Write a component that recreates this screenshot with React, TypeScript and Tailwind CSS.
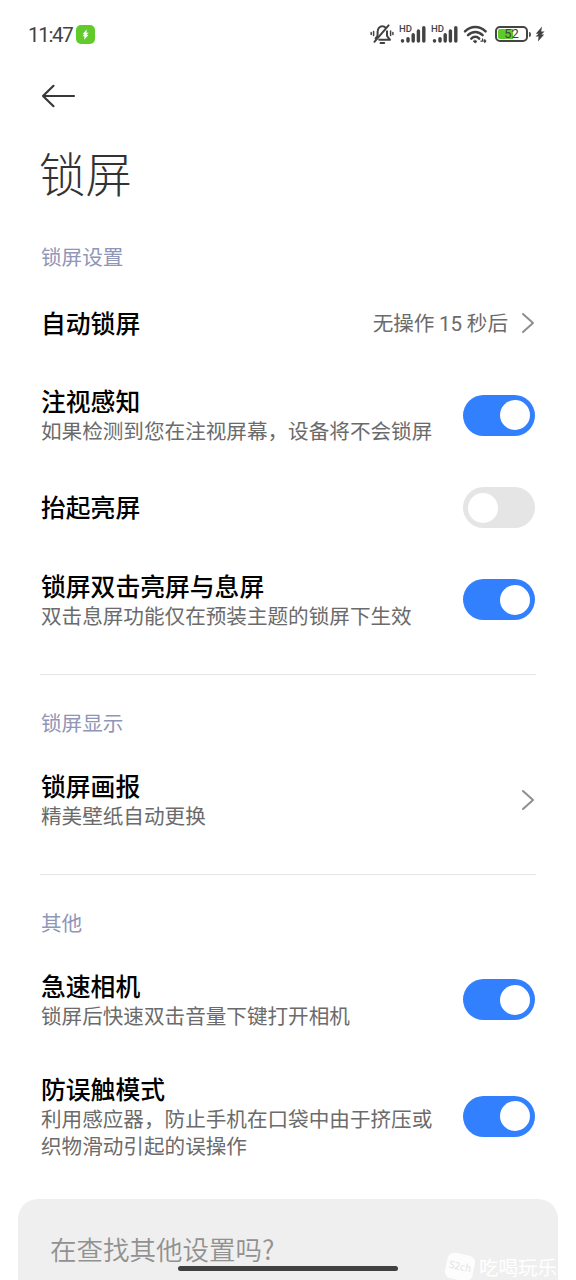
import { ReactNode, useState } from "react";
import clsx from "clsx";

const Bolt = ({ className }: { className?: string }) => (
    <svg viewBox="0 0 10 16" className={className} fill="currentColor">
        <path d="M7 0.5 0.8 7.8H3.6L0.6 10.4H3.6L3 15.5 9.2 8.6H6.4L9.6 5.6H6.2Z" />
    </svg>
);

const BellOff = () => (
    <svg viewBox="0 0 24 22" className="w-6 h-[22px] shrink-0" fill="none" stroke="currentColor" strokeWidth="2" strokeLinecap="round" strokeLinejoin="round">
        <path d="M5.6 15.6 7.6 12.6V8.7C7.6 5.8 9.6 3.2 12.2 3.2C13.6 3.2 14.8 3.7 15.6 4.6" />
        <path d="M17 8.2V12.8L20 16.8H9.2" />
        <path d="M18.6 2.4 4.4 18.8" />
        <path d="M10.5 20H14.2" />
        <path d="M3.6 8.4V12.6M1.2 9.6V11.4M20.6 8V12.6M22.9 9.6V11.4" strokeWidth="1.5" />
    </svg>
);

const Signal = () => (
    <div className="relative w-[27px] h-5 shrink-0">
        <span className="absolute left-0 top-0 text-[9.5px] leading-[9px] font-medium">HD</span>
        <svg viewBox="0 0 27 20" className="w-[27px] h-5" stroke="currentColor" strokeWidth="3.4" strokeLinecap="round">
            <path d="M3.5 17V16.6M9 17V14.6M14.2 17V10.8M19.4 17V7M24.8 17V3.8" />
        </svg>
    </div>
);

const Wifi = () => (
    <svg viewBox="0 0 25 20" className="w-[25px] h-5 shrink-0" fill="none" stroke="currentColor" strokeWidth="2.5" strokeLinecap="round">
        <path d="M2 7.4C7.8 1.4 16.8 1.4 22.6 7.4" />
        <path d="M5 11.2C9.2 6.8 15.4 6.8 19.6 11.2" />
        <path d="M8.3 14.6C10.7 12.2 14 12.2 16.2 14.6" />
        <path d="M12.2 16.2 14 17.5 12.2 19 10.4 17.5Z" fill="currentColor" strokeWidth="0.8" />
        <path d="M18 17.2H19.6V15M21.8 15.6V18.2M21 17 21.8 18.2 22.8 17" strokeWidth="1.3" />
    </svg>
);

const Battery = () => (
    <div className="flex items-center gap-[1px] shrink-0">
        <div className="relative w-[33px] h-4 rounded-[5px] border-2 border-[#444] p-[1px]">
            <div className="w-[15px] h-full rounded-l-[2px] bg-[#5ccb28]" />
            <span className="absolute inset-0 text-center text-[13px] leading-[12px]">52</span>
        </div>
        <div className="w-[2px] h-[5px] rounded-r bg-[#555]" />
    </div>
);

const StatusBar = () => (
    <div className="flex items-center h-[68px] pl-7 pr-[31px] text-[#424242] font-['Roboto',sans-serif]">
        <span className="w-[48px] pt-px text-[20.5px] leading-6 tracking-[-1.3px]">11:47</span>
        <div className="size-[19px] rounded-[5px] bg-[#62cb2c] flex items-center justify-center text-white">
            <Bolt className="w-[7px] h-[11px]" />
        </div>
        <div className="ml-auto flex items-center">
            <BellOff />
            <div className="ml-[5px] flex gap-[5px]">
                <Signal />
                <Signal />
            </div>
            <div className="ml-[5px]"><Wifi /></div>
            <div className="ml-[7px]"><Battery /></div>
            <Bolt className="ml-1 w-[10px] h-4" />
        </div>
    </div>
);

const Chevron = () => (
    <svg viewBox="0 0 14 22" className="w-[14px] h-[22px] shrink-0" fill="none" stroke="#8e8e8e" strokeWidth="2" strokeLinecap="round" strokeLinejoin="round">
        <path d="M2 2 12 11 2 20" />
    </svg>
);

const Toggle = ({ initial }: { initial: boolean }) => {

    const [on, setOn] = useState(initial);

    return (
        <button
            role="switch"
            aria-checked={on}
            onClick={() => setOn(!on)}
            className={clsx("flex items-center w-[72px] h-[41px] rounded-full px-[5px] shrink-0", on ? "bg-[#3380ff] justify-end" : "bg-[#e5e5e5] justify-start")}
        >
            <span className="size-[30px] rounded-full bg-white" />
        </button>
    );
};

const Row = ({ title, desc, tall, children }: { title: string; desc?: string; tall?: boolean; children: ReactNode }) => (
    <div className={clsx("flex items-center justify-between px-[41px]", tall ? "h-[141px]" : "h-[92.2px]")}>
        <div className="w-[396px] pb-[2px]">
            <h2 className="text-[24.8px] leading-[33px] font-medium text-black whitespace-nowrap">{title}</h2>
            {desc && <p className="text-[20.6px] leading-[27px] text-[#6b6b6b]">{desc}</p>}
        </div>
        {children}
    </div>
);

const Label = ({ children }: { children: ReactNode }) => (
    <div className="h-[50.7px] px-[41px] text-[20.6px] leading-[38px] text-[#8f96b8]">{children}</div>
);

const Divider = () => <div className="mx-10 mt-7 mb-[28px] h-px bg-[#e6e6e6]" />;

export default function App() {
    return (
        <div className="relative w-[576px] h-[1280px] overflow-hidden bg-white font-['Noto_Sans_CJK_SC',sans-serif]">
            <StatusBar />

            <div className="h-14 pl-[41px] flex items-center">
                <svg viewBox="0 0 36 24" className="w-9 h-6" fill="none" stroke="#383838" strokeWidth="2.2" strokeLinecap="round" strokeLinejoin="round">
                    <path d="M33 12H2M12.5 1.8 2 12 12.5 22.2" />
                </svg>
            </div>

            <h1 className="h-[112px] pl-[39px] text-[46.5px] leading-[96px] font-light text-[#333]">锁屏</h1>

            <div className="h-[41.2px] px-[41px] text-[20.6px] leading-[40px] text-[#8f96b8]">锁屏设置</div>
            <div className="flex items-center justify-between h-[92.2px] px-[41px]">
                <h2 className="pb-[3px] text-[24.8px] leading-[34px] font-medium text-black">自动锁屏</h2>
                <div className="flex items-center gap-[13px]">
                    <span className="text-[20.6px] leading-[27px] text-[#6b6b6b]">
                        无操作 <span className="font-['Roboto',sans-serif]">15</span> 秒后
                    </span>
                    <Chevron />
                </div>
            </div>
            <Row title="注视感知" desc={"如果检测到您在注视屏幕\uff0c设备将不会锁屏"}><Toggle initial={true} /></Row>
            <Row title="抬起亮屏"><Toggle initial={false} /></Row>
            <Row title="锁屏双击亮屏与息屏" desc="双击息屏功能仅在预装主题的锁屏下生效"><Toggle initial={true} /></Row>

            <Divider />

            <Label>锁屏显示</Label>
            <Row title="锁屏画报" desc="精美壁纸自动更换"><Chevron /></Row>

            <Divider />

            <Label>其他</Label>
            <Row title="急速相机" desc="锁屏后快速双击音量下键打开相机"><Toggle initial={true} /></Row>
            <Row title="防误触模式" desc={"利用感应器\uff0c防止手机在口袋中由于挤压或织物滑动引起的误操作"} tall><Toggle initial={true} /></Row>

            <div className="mx-[18px] mt-[12.5px] h-28 rounded-[20px] bg-[#efefef] px-8 pt-8">
                <span className="text-[26.5px] leading-9 text-[#919191] font-[350]">在查找其他设置吗?</span>
            </div>

            {/* gesture bar */}
            <div className="absolute left-[178px] top-[1266px] w-[220px] h-[5px] rounded-full bg-[#404040]" />

            {/* watermark */}
            <div className="absolute left-[446px] top-[1253px] flex items-center gap-[5px] text-white">
                <div className="w-7 h-[26px] rotate-12 rounded-[7px] bg-white/90 text-center text-[10px] leading-6 text-[#e4e4e4]">S2ch</div>
                <span className="text-[19.5px] leading-7 whitespace-nowrap">吃喝玩乐</span>
            </div>
        </div>
    );
}
